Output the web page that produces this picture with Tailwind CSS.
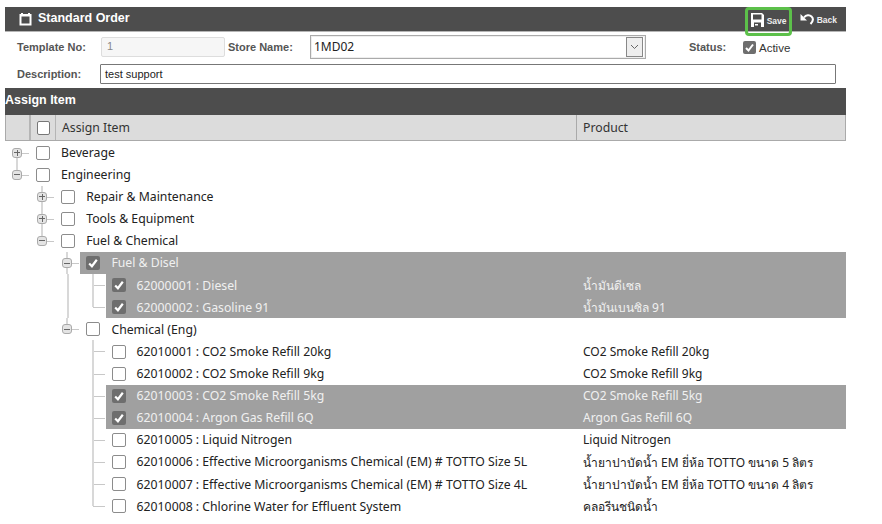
<!DOCTYPE html>
<html lang="en">
<head>
<meta charset="UTF-8">
<title>Standard Order</title>
<script src="https://cdn.jsdelivr.net/npm/@tailwindcss/browser@4"></script>
</head>
<body class="bg-white overflow-hidden font-['Liberation_Sans',sans-serif]">
<div class="w-[882px] h-[524px] pt-[7px] pl-[5px]">
  <div class="w-[841px]">
    <!-- title bar -->
    <div class="h-[25px] bg-[#4d4d4d] border-b border-[#b5b5b5] flex items-center text-white relative">
      <svg class="ml-[14px] w-[13px] h-[14px] mb-[1px]" viewBox="0 0 13 14"><path d="M2 1h2v1h5V1h2v1h1.500v11.500H.5V2H2z" fill="#fff"/><rect x="2.500" y="4.500" width="8" height="7" fill="#4d4d4d"/></svg>
      <span class="ml-[6px] text-[12.500px] font-bold mb-[1px]">Standard Order</span>
      <div class="ml-auto mr-[9px] flex items-center">
        <div class="w-[47px] h-[29px] mt-[4px] border-[3px] border-[#5cc04a] rounded-[4px] flex items-center pl-[3px] gap-[3px]">
          <svg class="w-[13px] h-[14px] shrink-0 mb-[2px]" viewBox="0 0 13 14"><path d="M0 0h11l2 2v12H0z" fill="#fff"/><rect x="2" y="1.500" width="8.500" height="5" fill="#4d4d4d"/><rect x="3" y="9.500" width="7" height="4.500" fill="#4d4d4d"/><rect x="4" y="11" width="3" height="1.500" fill="#fff"/></svg>
          <span class="text-[8.500px] font-bold text-[#eee]">Save</span>
        </div>
        <div class="ml-[8px] flex items-center gap-[3px]">
          <svg class="w-[14px] h-[13px]" viewBox="0 0 14 13" fill="none"><path d="M4 4.500C6 2 9.500 1.500 11.500 3.500 13.500 5.500 13 8.500 10.500 11" stroke="#fff" stroke-width="2"/><path d="M0.500 1v6.500H7z" fill="#fff"/></svg>
          <span class="text-[8.500px] font-bold text-[#eee] mt-[3px]">Back</span>
        </div>
      </div>
    </div>
    <!-- form -->
    <div class="h-[31px] flex items-center text-[11px] text-[#555] relative">
      <label class="w-[96px] pl-[12px] font-bold">Template No:</label>
      <div class="w-[124px] h-[20px] bg-[#f6f6f6] border border-[#ddd] rounded-[2px] pl-[5px] leading-[16px] text-[#888] mt-[-2px]">1</div>
      <label class="ml-[3px] w-[82px] font-bold">Store Name:</label>
      <div class="w-[336px] h-[24px] border border-[#aaa] shadow-[inset_0_0_0_1px_#eee] flex items-center pl-[3px] text-[12px] text-[#222] font-['Noto_Sans',sans-serif] mt-[-1px]">
        <span>1MD02</span>
        <span class="ml-auto mr-[2px] w-[17px] h-[20px] border border-[#888] bg-[#eee] flex items-center justify-center">
          <svg class="w-[9px] h-[6px]" viewBox="0 0 9 6" fill="none"><path d="M1 1l3.500 3.500L8 1" stroke="#666"/></svg>
        </span>
      </div>
      <label class="ml-[43px] w-[54px] font-bold">Status:</label>
      <span class="w-[13px] h-[13px] rounded-[2px] bg-[#6e6e6e] flex items-center justify-center mt-[-1px]">
        <svg class="w-[11px] h-[11px]" viewBox="0 0 11 11" fill="none"><path d="M2 6l2.500 2.500L9 2.500" stroke="#fff" stroke-width="2"/></svg>
      </span>
      <span class="ml-[3px] mt-[3px] text-[11.500px] text-[#333]">Active</span>
    </div>
    <div class="h-[25px] pb-[3px] flex items-center text-[11px] text-[#555]">
      <label class="w-[95px] pl-[12px] font-bold">Description:</label>
      <div class="w-[736px] h-[20px] border border-[#777] rounded-[1px] pl-[4px] leading-[18px] text-[#222] text-[11px]">test support</div>
    </div>
    <!-- assign item -->
    <div class="h-[27px] pb-[3px] bg-[#4d4d4d] flex items-center text-white text-[12.500px] font-bold">Assign Item</div>
    <div class="h-[26px] bg-[#dcdcdc] border border-t-0 border-[#aaa] flex items-stretch text-[12.250px] text-[#333] font-['Noto_Sans',sans-serif]">
      <div class="w-[25px] border-r-2 border-[#b5b5b5]"></div>
      <div class="w-[25px] border-r border-[#b5b5b5] flex items-center justify-center">
        <span class="w-[13px] h-[14px] border border-[#777] rounded-[2px] bg-white ml-[1px]"></span>
      </div>
      <div class="w-[521px] border-r border-[#aaa] pl-[6px] pt-[1px] flex items-center">Assign Item</div>
      <div class="pl-[6px] pt-[1px] flex items-center">Product</div>
    </div>
    <div id="tree" class="pt-[0.500px]"></div>
  </div>
</div>
<script>
  const rows = [
    { level: 0, open: false, label: 'Beverage', down: true },
    { level: 0, open: true, label: 'Engineering', up: true },
    { level: 1, open: false, label: 'Repair &amp; Maintenance', up: true, down: true },
    { level: 1, open: false, label: 'Tools &amp; Equipment', up: true, down: true },
    { level: 1, open: true, label: 'Fuel &amp; Chemical', up: true },
    { level: 2, open: true, label: 'Fuel &amp; Disel', checked: true, up: true, down: true },
    { level: 3, label: '62000001 : Diesel', product: 'น้ำมันดีเซล', checked: true, up: true, down: true, rails: [67] },
    { level: 3, label: '62000002 : Gasoline 91', product: 'น้ำมันเบนซิล 91', checked: true, up: true, rails: [67] },
    { level: 2, open: true, label: 'Chemical (Eng)', up: true },
    { level: 3, label: '62010001 : CO2 Smoke Refill 20kg', product: 'CO2 Smoke Refill 20kg', up: true, down: true },
    { level: 3, label: '62010002 : CO2 Smoke Refill 9kg', product: 'CO2 Smoke Refill 9kg', up: true, down: true },
    { level: 3, label: '62010003 : CO2 Smoke Refill 5kg', product: 'CO2 Smoke Refill 5kg', checked: true, up: true, down: true },
    { level: 3, label: '62010004 : Argon Gas Refill 6Q', product: 'Argon Gas Refill 6Q', checked: true, up: true, down: true },
    { level: 3, label: '62010005 : Liquid Nitrogen', product: 'Liquid Nitrogen', up: true, down: true },
    { level: 3, label: '62010006 : Effective Microorganisms Chemical (EM) # TOTTO Size 5L', product: 'น้ำยาปาบัดน้ำ EM ยี่ห้อ TOTTO ขนาด 5 ลิตร', up: true, down: true },
    { level: 3, label: '62010007 : Effective Microorganisms Chemical (EM) # TOTTO Size 4L', product: 'น้ำยาปาบัดน้ำ EM ยี่ห้อ TOTTO ขนาด 4 ลิตร', up: true, down: true },
    { level: 3, label: '62010008 : Chlorine Water for Effluent System', product: 'คลอรีนชนิดน้ำ', up: true }
  ];

  const check = '<svg class="w-[12px] h-[12px]" viewBox="0 0 11 11" fill="none"><path d="M2 6l2.500 2.500L9 2.500" stroke="#fff" stroke-width="2"/></svg>';

  function expander(open) {
    return `<span class="absolute left-[7px] top-[6px] w-[10px] h-[10px] rounded-[3px] border border-[#aaa] bg-[#e4e4e4] flex items-center justify-center">
      <span class="relative w-[6px] h-[1px] bg-[#666]">${open ? '' : '<span class="absolute left-[2.500px] top-[-2.500px] w-[1px] h-[6px] bg-[#666]"></span>'}</span>
    </span>`;
  }

  const tree = document.getElementById('tree');
  rows.forEach(r => {
    const x = r.level * 25.2;
    const row = document.createElement('div');
    row.className = 'relative h-[22.120px] text-[12.250px] font-["Noto_Sans",sans-serif]';
    // each row draws its own guide lines
    let lines = (r.rails || []).map(v => `<span class="absolute top-0 bottom-0 w-[2px] bg-[#d8d8d8]" style="left:${v - 5}px"></span>`).join('');
    lines += `<span class="absolute h-[1px] bg-[#c8c8c8] top-[11px]" style="left:${x + 12}px;width:12px"></span>`;
    if (r.up) lines += `<span class="absolute top-0 h-[11px] w-[2px] bg-[#d8d8d8]" style="left:${x + 11}px"></span>`;
    if (r.down) lines += `<span class="absolute top-[11px] bottom-0 w-[2px] bg-[#d8d8d8]" style="left:${x + 11}px"></span>`;
    const bg = r.checked
      ? `<span class="absolute top-0 bottom-0 right-0 bg-[#a0a0a0]" style="left:${x + 25}px"></span>`
      : '';
    const box = r.checked
      ? `<span class="w-[14px] h-[14px] rounded-[2px] bg-[#6e6e6e] flex items-center justify-center">${check}</span>`
      : `<span class="w-[14px] h-[14px] rounded-[2px] border border-[#8c8c8c] bg-white"></span>`;
    const text = r.checked ? 'text-[#f0f0f0]' : 'text-[#222]';
    row.innerHTML = `${bg}${lines}
      <span class="absolute top-0 bottom-0" style="left:${x}px">${r.open === undefined ? '' : expander(r.open)}</span>
      <div class="absolute inset-y-0 flex items-center ${text}" style="left:${x + 31}px">
        ${box}<span class="ml-[11px] mt-[1px] whitespace-nowrap">${r.label}</span>
      </div>
      ${r.product ? `<div class="absolute inset-y-0 left-[578px] pt-[1px] flex items-center whitespace-nowrap text-[12px] ${text}">${r.product}</div>` : ''}`;
    tree.appendChild(row);
  });
</script>
</body>
</html>
